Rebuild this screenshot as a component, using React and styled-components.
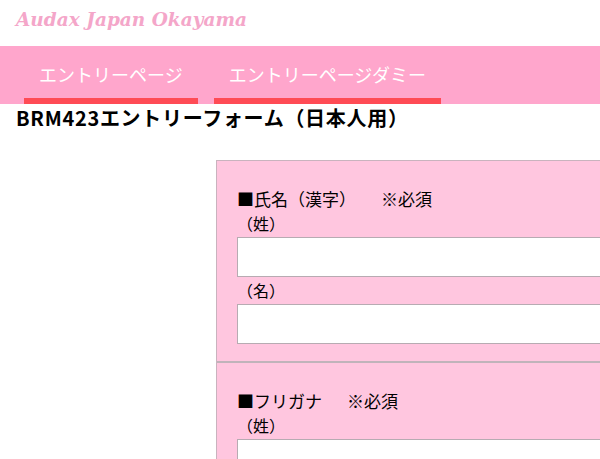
import React from 'react'
import styled, { createGlobalStyle } from 'styled-components'

const GlobalStyle = createGlobalStyle`
    html, body {
        margin : 0;
        padding : 0;
        overflow : hidden;
        background : #ffffff;
    }
    body {
        font-family : "Noto Sans CJK JP", "Noto Sans", sans-serif;
        color : #000000;
    }
`

const Header = styled.header`
    height : 46px;
    box-sizing : border-box;
    padding : 8px 16px 0;
`
const SiteTitle = styled.h1`
    margin : 0;
    font-family : "DejaVu Serif", "Liberation Serif", serif;
    font-size : 18.5px;
    line-height : 24px;
    font-weight : bold;
    font-style : italic;
    color : #f4a6c9;
`
const Nav = styled.nav`
    display : flex;
    gap : 16px;
    height : 58px;
    padding-left : 24px;
    background-color : #ffa6cc;
`
const Tab = styled.a`
    display : flex;
    align-items : center;
    height : 58px;
    box-sizing : border-box;
    padding : 4px 15px 0;
    border-bottom : 6px solid #ff4b55;
    font-size : 18px;
    color : #ffffff;
    text-decoration : none;
    white-space : nowrap;
`
const Main = styled.main`
    padding : 0 16px;
`
const PageTitle = styled.h2`
    margin : 2px 0 30px;
    font-size : 20px;
    line-height : 24px;
    font-weight : bold;
    letter-spacing : 0.7px;
`
const FormPanel = styled.form`
    margin-left : 200px;
    width : 560px;
    border : 1px solid #c9b3be;
    background-color : #ffc6df;
`
const Section = styled.div`
    padding : 28px 20px 17px;
    & + & {
        border-top : 2px solid #c0b3ba;
    }
`
const Label = styled.div`
    display : flex;
    font-size : 17px;
    line-height : 20px;
    margin-bottom : 4px;
    white-space : nowrap;
`
const Required = styled.span`
    margin-left : 25px;
`
const SubLabel = styled.div`
    font-size : 16px;
    line-height : 20px;
    margin : 3px 0 4px;
`
const Input = styled.input`
    display : block;
    width : 100%;
    height : 40px;
    box-sizing : border-box;
    border : 1px solid #b7abb2;
    background-color : #ffffff;
    font-size : 16px;
    outline : none;
`

const fields = [
    { label: '■氏名（漢字）', parts: ['（姓）', '（名）'] },
    { label: '■フリガナ', parts: ['（姓）', '（名）'] },
]

const App = () => {
    return (
        <>
            <GlobalStyle />
            <Header>
                <SiteTitle>Audax Japan Okayama</SiteTitle>
            </Header>
            <Nav>
                <Tab href="#">エントリーページ</Tab>
                <Tab href="#">エントリーページダミー</Tab>
            </Nav>
            <Main>
                <PageTitle>BRM423エントリーフォーム（日本人用）</PageTitle>
                <FormPanel onSubmit={(e) => e.preventDefault()}>
                    {fields.map((f) => (
                        <Section key={f.label}>
                            <Label>
                                {f.label}
                                <Required>※必須</Required>
                            </Label>
                            {f.parts.map((p) => (
                                <React.Fragment key={p}>
                                    <SubLabel>{p}</SubLabel>
                                    <Input type='text' />
                                </React.Fragment>
                            ))}
                        </Section>
                    ))}
                </FormPanel>
            </Main>
        </>
    )
}

export default App
